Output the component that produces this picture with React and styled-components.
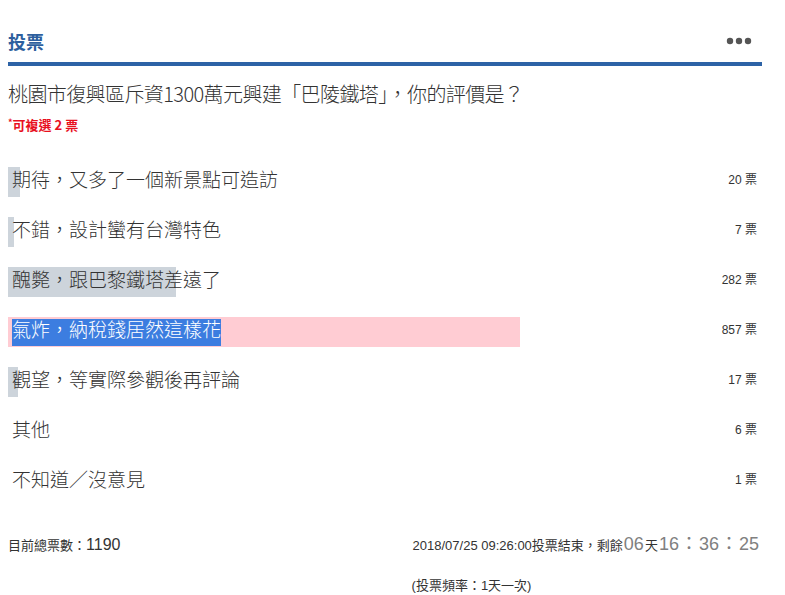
import React from "react";
import styled, { createGlobalStyle } from "styled-components";

const Global = createGlobalStyle`
  html, body { margin: 0; padding: 0; background: #fff; }
  body { font-family: "Liberation Sans", "Noto Sans CJK TC", sans-serif; color: #333; }
`;

const Page = styled.div`
  width: 754px;
  padding: 0 0 0 8px;
`;

const Header = styled.div`
  display: flex;
  align-items: center;
  justify-content: space-between;
  padding: 29px 10px 9px 0;
  border-bottom: 4px solid #2d63a6;
`;

const Title = styled.h2`
  margin: 0;
  font-size: 18px;
  line-height: 24px;
  font-weight: bold;
  color: #2d5f9e;
  font-family: "Noto Sans CJK TC", sans-serif;
`;

const Question = styled.div`
  margin-top: 16px;
  font-size: 20px;
  line-height: 24px;
  letter-spacing: -0.6px;
  font-weight: 300;
  color: #333;
  font-family: "Noto Sans CJK TC", sans-serif;
`;

const Note = styled.div`
  margin-top: 8px;
  font-size: 13px;
  line-height: 18px;
  font-weight: bold;
  color: #e8101e;
  font-family: "Noto Sans CJK TC", sans-serif;
`;

const Star = styled.sup`
  font-size: 9px;
  vertical-align: 4px;
`;

const Options = styled.div`
  margin-top: 33px;
  display: flex;
  flex-direction: column;
  gap: 20px;
`;

const Row = styled.div`
  display: flex;
  align-items: center;
  height: 30px;
`;

const Track = styled.div`
  position: relative;
  width: 711px;
  height: 30px;
  display: flex;
  align-items: center;
`;

const Fill = styled.div`
  position: absolute;
  left: 0;
  top: 0;
  bottom: 0;
  background: ${(p) => (p.$hot ? "#ffccd3" : "#cdd4db")};
`;

const Label = styled.span`
  position: relative;
  margin-left: 4px;
  padding-bottom: 7px;
  font-size: 19px;
  line-height: 20px;
  font-weight: 300;
  color: ${(p) => (p.$selected ? "#fff" : "#333")};
  background: ${(p) => (p.$selected ? "#3c7de0" : "transparent")};
  font-family: "Noto Sans CJK TC", sans-serif;
`;

const Count = styled.div`
  flex: 1;
  text-align: right;
  padding-right: 5px;
  margin-bottom: 7px;
  font-size: 12px;
  color: #333;
`;

const Footer = styled.div`
  margin-top: 33px;
  display: flex;
  justify-content: space-between;
  align-items: baseline;
  padding-right: 2px;
`;

const Total = styled.div`
  font-size: 13px;
  line-height: 24px;
  font-family: "Noto Sans CJK TC", sans-serif;
`;

const TotalNum = styled.span`
  font-family: "Liberation Sans", sans-serif;
  font-size: 16px;
`;

const Right = styled.div`
  display: flex;
  flex-direction: column;
  align-items: flex-start;
`;

const EndLine = styled.div`
  font-size: 13px;
  line-height: 24px;
  white-space: nowrap;
`;

const Small = styled.span`
  font-size: 13px;
  font-family: "Liberation Sans", sans-serif;
`;

const Big = styled.span`
  font-size: 18px;
  color: #808080;
  font-family: "Liberation Sans", sans-serif;
  margin: 0 1px;
`;

const BigColon = styled.span`
  font-size: 18px;
  color: #808080;
  font-family: "Noto Sans CJK TC", sans-serif;
`;

const Freq = styled.div`
  margin-top: 19px;
  margin-left: -1px;
  font-size: 13px;
  line-height: 18px;
`;

const data = [
  { text: "期待，又多了一個新景點可造訪", votes: 20 },
  { text: "不錯，設計蠻有台灣特色", votes: 7 },
  { text: "醜斃，跟巴黎鐵塔差遠了", votes: 282 },
  { text: "氣炸，納稅錢居然這樣花", votes: 857, hot: true, selected: true },
  { text: "觀望，等實際參觀後再評論", votes: 17 },
  { text: "其他", votes: 6 },
  { text: "不知道／沒意見", votes: 1 },
];

const total = 1190;

function Dots() {
  return (
    <svg width="26" height="8" viewBox="0 0 26 8">
      <circle cx="4" cy="4" r="3.2" fill="#555" />
      <circle cx="13" cy="4" r="3.2" fill="#555" />
      <circle cx="22" cy="4" r="3.2" fill="#555" />
    </svg>
  );
}

export default function App() {
  return (
    <Page>
      <Global />
      <Header>
        <Title>投票</Title>
        <Dots />
      </Header>
      <Question>桃園市復興區斥資1300萬元興建「巴陵鐵塔」，你的評價是？</Question>
      <Note>
        <Star>*</Star>可複選 2 票
      </Note>
      <Options>
        {data.map((d) => {
          const w = d.votes >= 7 ? Math.max(6, Math.round((d.votes / total) * 711)) : 0;
          return (
            <Row key={d.text}>
              <Track>
                <Fill $hot={d.hot} style={{ width: w + "px" }} />
                <Label $selected={d.selected}>{d.text}</Label>
              </Track>
              <Count>{d.votes} 票</Count>
            </Row>
          );
        })}
      </Options>
      <Footer>
        <Total>
          目前總票數：<TotalNum>1190</TotalNum>
        </Total>
        <Right>
          <EndLine>
            <Small>2018/07/25 09:26:00</Small>投票結束，剩餘<Big>06</Big>天<Big>16</Big>
            <BigColon>：</BigColon>
            <Big>36</Big>
            <BigColon>：</BigColon>
            <Big>25</Big>
          </EndLine>
          <Freq>(投票頻率：1天一次)</Freq>
        </Right>
      </Footer>
    </Page>
  );
}
